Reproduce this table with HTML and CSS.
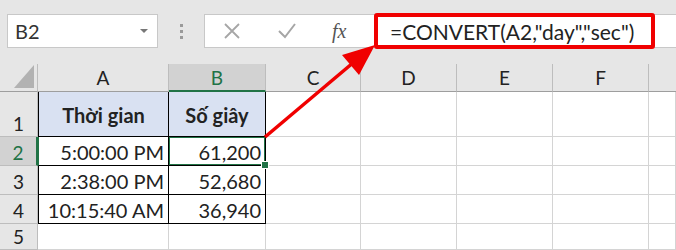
FILE: index.html
```html
<!DOCTYPE html>
<html lang="vi">
<head>
    <meta charset="UTF-8">
    <title>CONVERT</title>
    <link rel="stylesheet" href="styles.css">
</head>
<body>
    <div class="toolbar">
        <div class="name-box">
            <span>B2</span>
            <span class="caret"></span>
        </div>
        <div class="grip"><i></i><i></i><i></i></div>
        <div class="formula-bar">
            <svg class="tool-icon" width="18" height="18" viewBox="0 0 18 18">
                <path d="M2 2 L16 16 M16 2 L2 16" stroke="#a6a6a6" stroke-width="1.8" fill="none"/>
            </svg>
            <svg class="tool-icon" width="20" height="18" viewBox="0 0 20 18">
                <path d="M2 9 L8 15 L18 2" stroke="#a6a6a6" stroke-width="2" fill="none"/>
            </svg>
            <span class="fx">fx</span>
            <span class="formula">=CONVERT(A2,"day","sec")</span>
        </div>
    </div>

    <div class="sheet">
        <div class="corner"><span class="tri"></span></div>
        <div class="col-head">A</div>
        <div class="col-head active">B</div>
        <div class="col-head">C</div>
        <div class="col-head">D</div>
        <div class="col-head">E</div>
        <div class="col-head">F</div>
        <div class="col-head last"></div>

        <div class="row-head">1</div>
        <div class="cell tbl first title">Thời gian</div>
        <div class="cell tbl title">Số giây</div>
        <div class="cell"></div><div class="cell"></div><div class="cell"></div><div class="cell"></div><div class="cell"></div>

        <div class="row-head active">2</div>
        <div class="cell tbl first num">5:00:00 PM</div>
        <div class="cell tbl num selected">61,200</div>
        <div class="cell"></div><div class="cell"></div><div class="cell"></div><div class="cell"></div><div class="cell"></div>

        <div class="row-head">3</div>
        <div class="cell tbl first num">2:38:00 PM</div>
        <div class="cell tbl num">52,680</div>
        <div class="cell"></div><div class="cell"></div><div class="cell"></div><div class="cell"></div><div class="cell"></div>

        <div class="row-head">4</div>
        <div class="cell tbl first num">10:15:40 AM</div>
        <div class="cell tbl num">36,940</div>
        <div class="cell"></div><div class="cell"></div><div class="cell"></div><div class="cell"></div><div class="cell"></div>

        <div class="row-head">5</div>
        <div class="cell"></div><div class="cell"></div><div class="cell"></div><div class="cell"></div><div class="cell"></div><div class="cell"></div><div class="cell"></div>
    </div>

    <!-- pointer from B1 to the formula -->
    <svg class="arrow" width="676" height="250" viewBox="0 0 676 250">
        <line x1="265" y1="137" x2="354" y2="62" stroke="#f00000" stroke-width="3.5"/>
        <polygon points="375,45 359,75 342,55" fill="#f00000"/>
    </svg>
</body>
</html>
```

FILE: styles.css
```css
body {
    margin: 0;
    width: 676px;
    height: 250px;
    overflow: hidden;
    background: #e6e6e6;
    font-family: Lato, "Noto Sans", sans-serif;
    color: #222;
    position: relative;
}

.toolbar {
    display: flex;
    align-items: center;
    height: 64px;
    padding: 0 0 2px 7px;
    box-sizing: border-box;
}

.name-box {
    width: 151px;
    height: 34px;
    box-sizing: border-box;
    background: #fff;
    border: 1px solid #c8c8c8;
    display: flex;
    align-items: center;
    justify-content: space-between;
    padding: 0 9px 0 7px;
    font-size: 20px;
    color: #333;
}

.caret {
    width: 0;
    height: 0;
    border-left: 4px solid transparent;
    border-right: 4px solid transparent;
    border-top: 4px solid #777;
}

.grip {
    width: 46px;
    display: flex;
    flex-direction: column;
    align-items: center;
    gap: 3px;
}

.grip i {
    width: 3px;
    height: 3px;
    background: #9a9a9a;
}

.formula-bar {
    flex: 1;
    height: 34px;
    box-sizing: border-box;
    background: #fff;
    border: 1px solid #c8c8c8;
    border-right: none;
    display: flex;
    align-items: center;
    padding-left: 18px;
}

.tool-icon {
    margin-right: 36px;
}

.tool-icon + .tool-icon {
    margin-right: 35px;
}

.fx {
    font-family: "Liberation Serif", serif;
    font-style: italic;
    font-size: 20px;
    color: #555;
    width: 42px;
}

.formula {
    height: 36px;
    box-sizing: border-box;
    border: 4px solid #f00000;
    border-radius: 3px;
    display: flex;
    align-items: center;
    padding: 0 17px 0 12px;
    font-size: 21px;
    color: #222;
    white-space: nowrap;
}

.sheet {
    display: grid;
    grid-template-columns: 38px 131px 97px 95px 96px 96px 96px 1fr;
    grid-template-rows: 28px 45px 29px 29px 29px 26px;
    background: #fff;
}

.corner {
    background: #e6e6e6;
    border-right: 1px solid #bdbdbd;
    border-bottom: 1px solid #9e9e9e;
    box-sizing: border-box;
    position: relative;
}

.tri {
    position: absolute;
    right: 3px;
    bottom: 3px;
    width: 0;
    height: 0;
    border-left: 20px solid transparent;
    border-bottom: 23px solid #b2b2b2;
}

.col-head {
    background: #e6e6e6;
    border-right: 1px solid #bdbdbd;
    border-bottom: 1px solid #9e9e9e;
    box-sizing: border-box;
    display: flex;
    align-items: center;
    justify-content: center;
    font-size: 19px;
}

.col-head.active {
    background: #d2d2d2;
    color: #217346;
    border-bottom: 2px solid #217346;
}

.col-head.last {
    border-right: none;
}

.row-head {
    background: #e6e6e6;
    border-right: 1px solid #bdbdbd;
    border-bottom: 1px solid #bdbdbd;
    box-sizing: border-box;
    display: flex;
    align-items: flex-end;
    justify-content: center;
    padding-bottom: 1px;
    font-size: 19px;
}

.row-head.active {
    background: #d2d2d2;
    color: #217346;
    border-right: 2px solid #217346;
}

.cell {
    border-right: 1px solid #d4d4d4;
    border-bottom: 1px solid #d4d4d4;
    box-sizing: border-box;
    display: flex;
    align-items: flex-end;
    padding: 0 4px 1px;
    font-size: 20px;
    white-space: nowrap;
}

.cell.tbl {
    border-right-color: #000;
    border-bottom-color: #000;
}

.cell.first {
    border-left: 1px solid #000;
}

.row-head.active + .cell.first {
    border-left-color: #217346;
}

.title {
    background: #d9e1f2;
    font-weight: bold;
    justify-content: center;
    align-items: center;
    padding-top: 2px;
}

.num {
    justify-content: flex-end;
}

.selected {
    position: relative;
    box-shadow: inset 0 0 0 1px #217346;
    border-color: #217346;
}

.selected::after {
    content: "";
    position: absolute;
    right: -4px;
    bottom: -4px;
    width: 6px;
    height: 6px;
    background: #217346;
    border: 1px solid #fff;
}

.arrow {
    position: absolute;
    left: 0;
    top: 0;
    pointer-events: none;
}
```
